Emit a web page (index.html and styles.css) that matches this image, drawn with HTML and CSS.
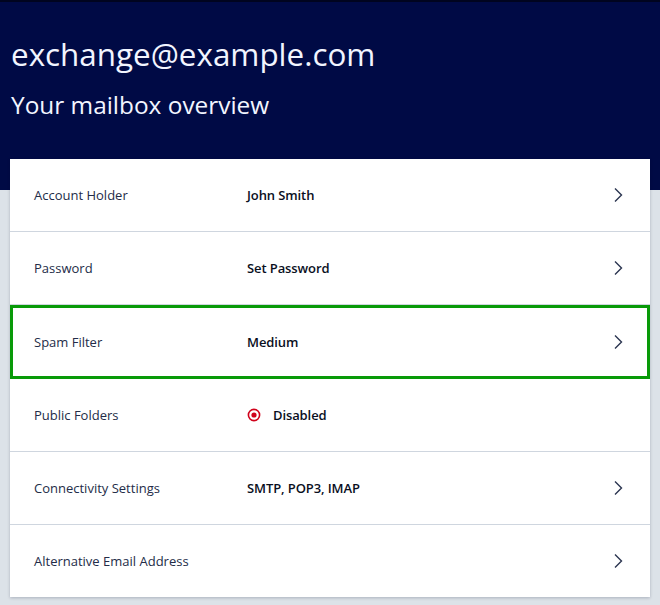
FILE: index.html
```html
<!DOCTYPE html>
<html>
<head>
<meta charset="utf-8">
<link rel="stylesheet" href="styles.css">
</head>
<body>
<header class="hero">
  <h1 class="title">exchange@example.com</h1>
  <p class="subtitle">Your mailbox overview</p>
</header>
<main class="card">
  <div class="row">
    <span class="label">Account Holder</span>
    <span class="value">John Smith</span>
    <svg class="chev" width="10" height="16" viewBox="0 0 10 16"><path d="M2 1.5 L8.5 8 L2 14.5" fill="none" stroke="#2b3550" stroke-width="1.4"/></svg>
  </div>
  <div class="row">
    <span class="label">Password</span>
    <span class="value">Set Password</span>
    <svg class="chev" width="10" height="16" viewBox="0 0 10 16"><path d="M2 1.5 L8.5 8 L2 14.5" fill="none" stroke="#2b3550" stroke-width="1.4"/></svg>
  </div>
  <div class="row selected">
    <span class="label">Spam Filter</span>
    <span class="value">Medium</span>
    <svg class="chev" width="10" height="16" viewBox="0 0 10 16"><path d="M2 1.5 L8.5 8 L2 14.5" fill="none" stroke="#2b3550" stroke-width="1.4"/></svg>
  </div>
  <div class="row">
    <span class="label">Public Folders</span>
    <span class="value status">
      <svg class="dot" width="14" height="14" viewBox="0 0 14 14"><circle cx="7" cy="7" r="5.6" fill="none" stroke="#d0021b" stroke-width="1.6"/><circle cx="7" cy="7" r="2.6" fill="#d0021b"/></svg>
      Disabled
    </span>
  </div>
  <div class="row">
    <span class="label">Connectivity Settings</span>
    <span class="value">SMTP, POP3, IMAP</span>
    <svg class="chev" width="10" height="16" viewBox="0 0 10 16"><path d="M2 1.5 L8.5 8 L2 14.5" fill="none" stroke="#2b3550" stroke-width="1.4"/></svg>
  </div>
  <div class="row last">
    <span class="label">Alternative Email Address</span>
    <span class="value"></span>
    <svg class="chev" width="10" height="16" viewBox="0 0 10 16"><path d="M2 1.5 L8.5 8 L2 14.5" fill="none" stroke="#2b3550" stroke-width="1.4"/></svg>
  </div>
</main>
</body>
</html>
```
FILE: styles.css
```css
* { box-sizing: border-box; }
html, body { margin: 0; padding: 0; }
body {
  background: #dce2e8;
  font-family: "Open Sans", "Noto Sans", sans-serif;
  width: 660px;
  height: 605px;
  overflow: hidden;
}
.hero {
  background: #000a45;
  border-top: 2px solid #00041f;
  height: 190px;
  padding: 30px 11px 0;
  color: #f2f5ff;
}
.title {
  margin: 0;
  font-size: 31.4px;
  font-weight: 400;
  line-height: 44px;
  letter-spacing: 0;
}
.subtitle {
  margin: 12px 0 0;
  font-size: 24.4px;
  font-weight: 400;
  line-height: 34px;
}
.card {
  margin: -31px 10px 0;
  background: #fff;
  box-shadow: 0 1px 3px rgba(0, 10, 40, 0.22);
}
.row {
  display: flex;
  align-items: center;
  height: 73px;
  padding: 0 27px 0 24px;
  border-bottom: 1px solid #cfd6df;
  font-size: 13px;
}
.row.last { border-bottom: none; height: 72px; }
.row.selected {
  height: 74px;
  border-bottom: none;
  outline: 3px solid #089a08;
  outline-offset: -3px;
}
.label {
  width: 213px;
  color: #232c48;
}
.value {
  flex: 1;
  font-weight: 600;
  color: #0a0f1e;
  letter-spacing: -0.1px;
}
.status {
  display: flex;
  align-items: center;
  gap: 12px;
}
.dot { display: block; }
.chev { display: block; }
```
